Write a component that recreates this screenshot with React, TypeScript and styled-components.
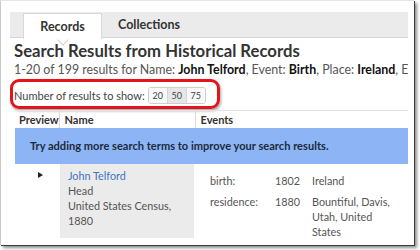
import React from "react";
import styled, { createGlobalStyle } from "styled-components";

const Global = createGlobalStyle`
  html, body {
    margin: 0;
    padding: 0;
    background: #ffffff;
  }
  body {
    font-family: "Lato", "Liberation Sans", sans-serif;
    color: #333;
  }
`;

const Page = styled.div`
  width: 420px;
  height: 250px;
  overflow: hidden;
  background: #ffffff;
`;

const Frame = styled.div`
  width: 414px;
  height: 245px;
  box-sizing: border-box;
  background: #ffffff;
  border-left: 1px solid #c9c9c9;
  border-top: 1px solid #e6e6e6;
  box-shadow: 1px 1px 0 #3c3c3c, 3px 3px 3px rgba(0, 0, 0, 0.45);
  overflow: hidden;
`;

const Shot = styled.div`
  margin: 11px 0 0 9px;
  width: 398px;
  overflow: hidden;
`;

const TabBar = styled.div`
  display: flex;
  height: 25px;
  padding-left: 13px;
  background: #ebebeb;
  border-bottom: 1px solid #d4d4d4;
`;

const Tab = styled.div<{ $active?: boolean }>`
  position: relative;
  display: flex;
  align-items: center;
  justify-content: center;
  box-sizing: border-box;
  height: ${(p) => (p.$active ? "26px" : "25px")};
  margin-top: ${(p) => (p.$active ? "1px" : "0")};
  min-width: ${(p) => (p.$active ? "79px" : "0")};
  padding: 0 16px;
  font-size: 12.5px;
  font-weight: 700;
  color: #333;
  background: ${(p) => (p.$active ? "#ffffff" : "transparent")};
  border: ${(p) => (p.$active ? "1px solid #d9d9d9" : "none")};
  border-bottom: none;
  z-index: 1;

  &::after {
    content: "";
    display: ${(p) => (p.$active ? "block" : "none")};
    position: absolute;
    left: 50%;
    bottom: -5px;
    width: 7px;
    height: 7px;
    margin-left: -4px;
    background: #ffffff;
    border-right: 1px solid #d4d4d4;
    border-bottom: 1px solid #d4d4d4;
    transform: rotate(45deg);
  }
`;

const Title = styled.h1`
  margin: 3px 0 0 4px;
  font-size: 16.7px;
  line-height: 20px;
  font-weight: 700;
  color: #333;
  white-space: nowrap;
`;

const Summary = styled.p`
  margin: 1px 0 0 4px;
  font-size: 12.4px;
  line-height: 16px;
  color: #555;
  white-space: nowrap;

  strong {
    color: #111;
  }
`;

const Highlight = styled.div`
  display: flex;
  align-items: center;
  box-sizing: border-box;
  width: 210px;
  height: 30px;
  margin-top: 1px;
  padding: 2px 0 0 1px;
  border: 3.5px solid #e3141c;
  border-radius: 9px;
  box-shadow: 1px 2px 3px rgba(0, 0, 0, 0.35);
`;

const SizeLabel = styled.span`
  font-size: 11px;
  color: #444;
  white-space: nowrap;
  margin-right: 3px;
`;

const SizeGroup = styled.div`
  display: flex;
  border: 1px solid #cfcfcf;
  border-radius: 3px;
  overflow: hidden;
`;

const SizeButton = styled.span<{ $selected?: boolean }>`
  display: flex;
  align-items: center;
  justify-content: center;
  width: 18px;
  height: 15px;
  font-size: 9px;
  color: #444;
  background: ${(p) => (p.$selected ? "#e6e6e6" : "#f8f8f8")};
  & + & {
    border-left: 1px solid #d6d6d6;
  }
`;

const Table = styled.table`
  margin: 1px 0 0 5px;
  width: 393px;
  border-collapse: collapse;
  table-layout: fixed;
`;

const HeadCell = styled.th<{ $w: number; $last?: boolean }>`
  box-sizing: border-box;
  width: ${(p) => p.$w}px;
  height: 17px;
  padding: 0 0 0 ${(p) => (p.$w < 50 ? 4 : 5)}px;
  text-align: left;
  font-size: 11px;
  font-weight: 700;
  color: #333;
  border-top: 1px solid #e2e2e2;
  border-right: ${(p) => (p.$last ? "none" : "1px solid #dadada")};
  white-space: nowrap;
`;

const Banner = styled.td`
  height: 36px;
  padding: 0 0 0 15px;
  background: #8db5f6;
  font-size: 11.1px;
  font-weight: 700;
  color: #1d2a3b;
  white-space: nowrap;
`;

const PreviewCell = styled.td`
  vertical-align: top;
  padding: 8px 0 0 23px;
`;

const Expander = styled.span`
  display: block;
  width: 0;
  height: 0;
  border-left: 5px solid #222;
  border-top: 3.5px solid transparent;
  border-bottom: 3.5px solid transparent;
`;

const NameCell = styled.td`
  vertical-align: top;
  padding: 0 1px 0 1px;
`;

const NameBox = styled.div`
  background: #ebebeb;
  padding: 4px 8px 10px 8px;
  font-size: 10.8px;
  line-height: 15px;
  color: #555;
`;

const NameLink = styled.a`
  color: #3d73c8;
  text-decoration: none;
`;

const EventsCell = styled.td`
  vertical-align: top;
  padding: 9px 0 0 15px;
`;

const EventGrid = styled.div`
  display: grid;
  grid-template-columns: 65px 37px 84px;
  row-gap: 6px;
  font-size: 10.8px;
  line-height: 15px;
  color: #555;
`;

const events = [
  { type: "birth:", year: "1802", place: "Ireland" },
  { type: "residence:", year: "1880", place: "Bountiful, Davis, Utah, United States" },
];

export default function App() {
  return (
    <Page>
      <Global />
      <Frame>
        <Shot>
          <TabBar>
            <Tab $active>Records</Tab>
            <Tab>Collections</Tab>
          </TabBar>
          <Title>Search Results from Historical Records</Title>
          <Summary>
            1-20 of 199 results for Name: <strong>John Telford</strong>, Event:{" "}
            <strong>Birth</strong>, Place: <strong>Ireland</strong>, Event: <strong>Residence</strong>
          </Summary>
          <Highlight>
            <SizeLabel>Number of results to show:</SizeLabel>
            <SizeGroup>
              <SizeButton>20</SizeButton>
              <SizeButton $selected>50</SizeButton>
              <SizeButton>75</SizeButton>
            </SizeGroup>
          </Highlight>
          <Table>
            <thead>
              <tr>
                <HeadCell $w={44}>Preview</HeadCell>
                <HeadCell $w={136}>Name</HeadCell>
                <HeadCell $w={213} $last>
                  Events
                </HeadCell>
              </tr>
            </thead>
            <tbody>
              <tr>
                <Banner colSpan={3}>Try adding more search terms to improve your search results.</Banner>
              </tr>
              <tr>
                <PreviewCell>
                  <Expander />
                </PreviewCell>
                <NameCell>
                  <NameBox>
                    <NameLink href="#">John Telford</NameLink>
                    <br />
                    Head
                    <br />
                    United States Census,
                    <br />
                    1880
                  </NameBox>
                </NameCell>
                <EventsCell>
                  <EventGrid>
                    {events.map((e) => (
                      <React.Fragment key={e.type}>
                        <span>{e.type}</span>
                        <span>{e.year}</span>
                        <span>{e.place}</span>
                      </React.Fragment>
                    ))}
                  </EventGrid>
                </EventsCell>
              </tr>
            </tbody>
          </Table>
        </Shot>
      </Frame>
    </Page>
  );
}
